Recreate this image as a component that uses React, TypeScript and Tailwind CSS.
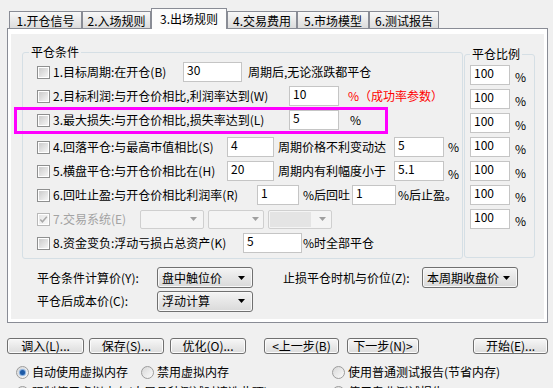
import React from "react";

const Tri = ({ color = "#000" }: { color?: string }) => (
  <svg width="7" height="4" viewBox="0 0 7 4" className="shrink-0">
    <path d="M0 0H7L3.5 4Z" fill={color} />
  </svg>
);

function Check({ checked = false, disabled = false }: { checked?: boolean; disabled?: boolean }) {
  return (
    <div
      className={
        disabled
          ? "w-[13px] h-[13px] shrink-0 border border-[#b8b8b8] bg-white p-px"
          : "w-[13px] h-[13px] shrink-0 border border-[#8e8f8f] bg-white p-px"
      }
    >
      <div
        className={
          disabled
            ? "relative w-full h-full bg-linear-to-br from-[#e6e6e6] to-[#f8f8f8]"
            : "relative w-full h-full bg-linear-to-br from-[#cbcbcb] to-[#f5f5f5]"
        }
      >
        {checked && (
          <svg className="absolute left-0 top-0" width="9" height="9" viewBox="0 0 9 9">
            <path d="M1.3 4.6L3.4 6.8L7.8 1.8" stroke="#a8a8a8" strokeWidth="1.5" fill="none" />
          </svg>
        )}
      </div>
    </div>
  );
}

function Box({ w, v }: { w: string; v?: string }) {
  return (
    <div className={`${w} h-[20px] shrink-0 border border-[#c5c5c5] bg-white pl-[3px] leading-[14px]`}>
      {v}
    </div>
  );
}

function Combo({ w, v }: { w: string; v: string }) {
  return (
    <div
      className={`${w} h-[21px] shrink-0 rounded-[3px] border border-[#707070] bg-linear-to-b from-[#f4f4f4] to-[#d9d9d9] shadow-[inset_0_0_0_1px_#f8f8f8] flex items-center justify-between pl-[4px] pr-[7px]`}
    >
      <span>{v}</span>
      <Tri />
    </div>
  );
}

function DCombo({ w, fill = false, pr }: { w: string; fill?: boolean; pr: string }) {
  return (
    <div
      className={`${w} ${pr} h-[19px] shrink-0 rounded-[2px] border border-[#cfcfcf] bg-[#f4f4f4] flex items-center`}
    >
      {fill ? <div className="flex-1 self-stretch m-[1px] mr-[8px] bg-[#e4e4e4]" /> : <div className="flex-1" />}
      <Tri color="#9f9f9f" />
    </div>
  );
}

function Btn({ w, label }: { w: string; label: string }) {
  return (
    <div
      className={`${w} h-[16px] shrink-0 rounded-[3px] border border-[#707070] bg-linear-to-b from-[#f7f7f7] to-[#dcdcdc] shadow-[inset_0_0_0_1px_#fbfbfb] flex items-center justify-center leading-[14px]`}
    >
      {label}
    </div>
  );
}

function Radio({ checked = false }: { checked?: boolean }) {
  return (
    <div className="w-[13px] h-[13px] shrink-0 rounded-full border border-[#9c9c9c] bg-linear-to-br from-[#d8d8d8] to-[#fbfbfb] flex items-center justify-center">
      {checked && <div className="w-[5px] h-[5px] rounded-full bg-[#1d5aa6] shadow-[0_0_1px_1px_#79a6dc]" />}
    </div>
  );
}

function Tab({ w, label, active = false }: { w: string; label: string; active?: boolean }) {
  if (active)
    return (
      <div className={`${w} h-[21px] shrink-0 relative border border-b-0 border-[#898c95] bg-[#fcfcfc] flex items-center justify-center pb-[1px]`}>
        {label}
      </div>
    );
  return (
    <div
      className={`${w} h-[17px] mb-[1px] shrink-0 border border-b-0 border-[#898c95] bg-linear-to-b from-[#f8f8f8] to-[#dcdcdc] flex items-center justify-center pt-[2px]`}
    >
      {label}
    </div>
  );
}

export default function App() {
  return (
    <div className="relative w-[553px] h-[388px] overflow-hidden bg-[#f0f0f0] text-[12px] leading-[14px] text-black [font-family:'Noto_Sans_CJK_SC','Noto_Sans',sans-serif]">
      {/* tabs */}
      <div className="relative z-10 flex items-end h-[29px] pl-[9px]">
        <Tab w="w-[73px]" label="1.开仓信号" />
        <Tab w="w-[69px]" label="2.入场规则" />
        <Tab w="w-[76px]" label="3.出场规则" active />
        <Tab w="w-[70px]" label="4.交易费用" />
        <Tab w="w-[72px]" label="5.市场模型" />
        <Tab w="w-[70px]" label="6.测试报告" />
      </div>

      {/* panel */}
      <div className="relative -mt-px ml-[7px] w-[541px] h-[295px] border border-[#898c95] bg-white pt-[5px] px-[3px] pb-[3px]">
        <div className="h-full bg-[#f0f0f0] flex flex-col">
          <div className="flex items-start">
            {/* main group */}
            <fieldset className="ml-[11px] mt-[11px] w-[441px] h-[214px] shrink-0 border border-[#d5dfe5] rounded-[3px]">
              <legend className="ml-[6px] px-[2px] leading-[14px]">平仓条件</legend>
              <div className="pt-[1px] pl-[14px] flex flex-col">
                <div className="flex items-center h-[24px]">
                  <Check />
                  <span className="ml-[3px] w-[130px] shrink-0 whitespace-nowrap">1.目标周期:在开仓(B)</span>
                  <Box w="w-[59px]" v="30" />
                  <span className="ml-[6px] whitespace-nowrap">周期后,无论涨跌都平仓</span>
                </div>
                <div className="flex items-center h-[24px]">
                  <Check />
                  <span className="ml-[3px] w-[236px] shrink-0 whitespace-nowrap">2.目标利润:与开仓价相比,利润率达到(W)</span>
                  <Box w="w-[50px]" v="10" />
                  <span className="ml-[9px] whitespace-nowrap text-[#ff0000]">%（成功率参数）</span>
                </div>
                <div className="flex items-center h-[24px]">
                  <Check />
                  <span className="ml-[3px] w-[236px] shrink-0 whitespace-nowrap">3.最大损失:与开仓价相比,损失率达到(L)</span>
                  <Box w="w-[50px]" v="5" />
                  <span className="ml-[11px] whitespace-nowrap">%</span>
                </div>
                <div className="flex items-center h-[24px] mt-[3px]">
                  <Check />
                  <span className="ml-[3px] w-[174px] shrink-0 whitespace-nowrap">4.回落平仓:与最高市值相比(S)</span>
                  <Box w="w-[47px]" v="4" />
                  <span className="ml-[4px] w-[116px] shrink-0 whitespace-nowrap">周期价格不利变动达</span>
                  <Box w="w-[50px]" v="5" />
                  <span className="ml-[4px]">%</span>
                </div>
                <div className="flex items-center h-[24px]">
                  <Check />
                  <span className="ml-[3px] w-[174px] shrink-0 whitespace-nowrap">5.横盘平仓:与开仓价相比在(H)</span>
                  <Box w="w-[47px]" v="20" />
                  <span className="ml-[4px] w-[116px] shrink-0 whitespace-nowrap">周期内有利幅度小于</span>
                  <Box w="w-[50px]" v="5.1" />
                  <span className="ml-[4px] mt-[5px]">%</span>
                </div>
                <div className="flex items-center h-[24px]">
                  <Check />
                  <span className="ml-[3px] w-[204px] shrink-0 whitespace-nowrap">6.回吐止盈:与开仓价相比利润率(R)</span>
                  <Box w="w-[42px]" v="1" />
                  <span className="ml-[4px] w-[49px] shrink-0 whitespace-nowrap">%后回吐</span>
                  <Box w="w-[44px]" v="1" />
                  <span className="ml-[2px] whitespace-nowrap">%后止盈。</span>
                </div>
                <div className="flex items-center h-[24px]">
                  <Check checked disabled />
                  <span className="ml-[3px] w-[87px] shrink-0 whitespace-nowrap text-[#a3a3a3]">7.交易系统(E)</span>
                  <DCombo w="w-[64px]" pr="pr-[6px]" />
                  <div className="ml-[4px]">
                    <DCombo w="w-[56px]" pr="pr-[4px]" />
                  </div>
                  <div className="ml-[4px]">
                    <DCombo w="w-[64px]" pr="pr-[5px]" fill />
                  </div>
                </div>
                <div className="flex items-center h-[24px]">
                  <Check />
                  <span className="ml-[3px] w-[190px] shrink-0 whitespace-nowrap">8.资金变负:浮动亏损占总资产(K)</span>
                  <Box w="w-[59px]" v="5" />
                  <span className="ml-[1px] whitespace-nowrap">%时全部平仓</span>
                </div>
              </div>
            </fieldset>

            {/* ratio group */}
            <fieldset className="ml-[1px] mt-[13px] w-[71px] h-[211px] shrink-0 border border-[#d5dfe5] rounded-[3px]">
              <legend className="ml-[5px] px-[2px] leading-[14px]">平仓比例</legend>
              <div className="pt-[2px] flex flex-col">
                {[0, 1, 2, 3, 4, 5, 6].map((i) => (
                  <div key={i} className="flex items-center h-[24px] pl-[5px]">
                    <Box w="w-[40px]" v="100" />
                    <span className="ml-[5px] mt-[3px]">%</span>
                  </div>
                ))}
              </div>
            </fieldset>
          </div>

          <div className="flex items-center mt-[8px] h-[21px] pl-[26px]">
            <span className="w-[120px] shrink-0 whitespace-nowrap">平仓条件计算价(Y):</span>
            <Combo w="w-[96px]" v="盘中触位价" />
            <span className="ml-[30px] w-[139px] shrink-0 whitespace-nowrap">止损平仓时机与价位(Z):</span>
            <Combo w="w-[96px]" v="本周期收盘价" />
          </div>
          <div className="flex items-center mt-[3px] h-[20px] pl-[26px]">
            <span className="w-[120px] shrink-0 whitespace-nowrap">平仓后成本价(C):</span>
            <Combo w="w-[96px]" v="浮动计算" />
          </div>
        </div>
      </div>

      {/* buttons */}
      <div className="flex items-center mt-[15px]">
        <div className="ml-[7px]">
          <Btn w="w-[77px]" label="调入(L)..." />
        </div>
        <div className="ml-[5px]">
          <Btn w="w-[75px]" label="保存(S)..." />
        </div>
        <div className="ml-[6px]">
          <Btn w="w-[76px]" label="优化(O)..." />
        </div>
        <div className="ml-[18px]">
          <Btn w="w-[75px]" label="<上一步(B)" />
        </div>
        <div className="ml-[8px]">
          <Btn w="w-[72px]" label="下一步(N)>" />
        </div>
        <div className="ml-[54px]">
          <Btn w="w-[75px]" label="开始(E)..." />
        </div>
      </div>

      {/* radios */}
      <div className="mt-[8px] flex flex-col">
        <div className="flex items-center h-[20px]">
          <div className="w-[332px] shrink-0 pl-[16px] flex items-center">
            <Radio checked />
            <span className="ml-[3px] w-[109px] shrink-0 whitespace-nowrap">自动使用虚拟内存</span>
            <Radio />
            <span className="ml-[3px] whitespace-nowrap">禁用虚拟内存</span>
          </div>
          <div className="flex items-center">
            <Radio />
            <span className="ml-[3px] whitespace-nowrap">使用普通测试报告(节省内存)</span>
          </div>
        </div>
        <div className="flex items-center h-[20px]">
          <div className="w-[332px] shrink-0 pl-[16px] flex items-center">
            <Radio />
            <span className="ml-[3px] whitespace-nowrap">强制使用虚拟内存(大周品种测试时请选此项)</span>
          </div>
          <div className="flex items-center">
            <Radio />
            <span className="ml-[3px] whitespace-nowrap">使用专业测试报告</span>
          </div>
        </div>
      </div>

      {/* magenta annotation */}
      <div className="absolute left-[14px] top-[107px] w-[374px] h-[27px] border-[3px] border-[#ff00ff] pointer-events-none" />
    </div>
  );
}
